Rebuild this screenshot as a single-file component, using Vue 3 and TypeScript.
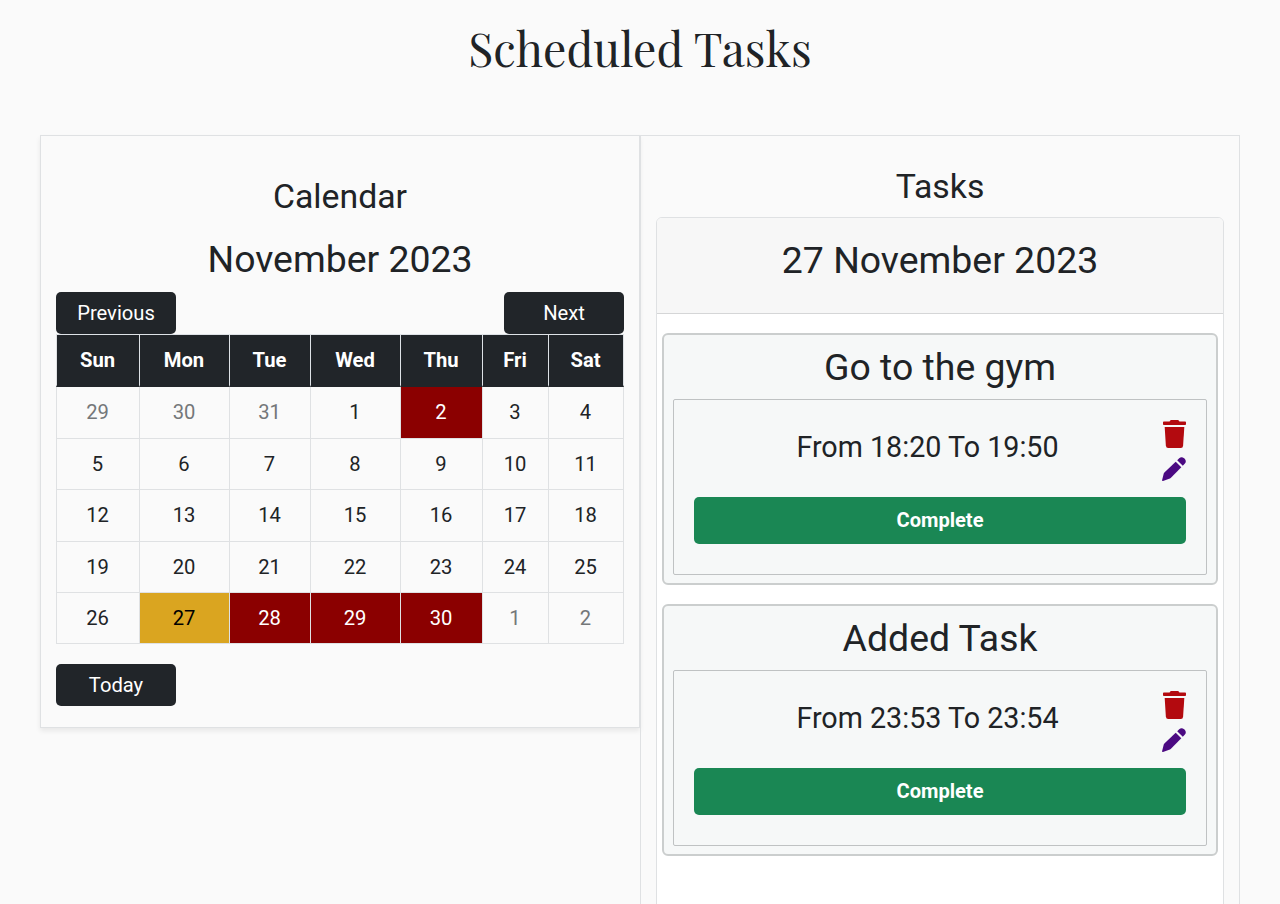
<script setup lang="ts">
interface Day {
  label: number
  state?: 'muted' | 'busy' | 'selected'
}

interface Task {
  title: string
  from: string
  to: string
}

const weekdays: string[] = ['Sun', 'Mon', 'Tue', 'Wed', 'Thu', 'Fri', 'Sat']
const busyDays = [2, 28, 29, 30]

function monthDay(label: number): Day {
  if (label === 27) return { label, state: 'selected' }
  return busyDays.includes(label) ? { label, state: 'busy' } : { label }
}

const days: Day[] = [
  ...[29, 30, 31].map((label): Day => ({ label, state: 'muted' })),
  ...Array.from({ length: 30 }, (_, i) => monthDay(i + 1)),
  ...[1, 2].map((label): Day => ({ label, state: 'muted' })),
]

const tasks: Task[] = [
  { title: 'Go to the gym', from: '18:20', to: '19:50' },
  { title: 'Added Task', from: '23:53', to: '23:54' },
]
</script>

<template>
  <main class="page">
    <h1 class="page-title">Scheduled Tasks</h1>
    <div class="columns">
      <section class="calendar">
        <h3 class="calendar-title">Calendar</h3>
        <h2 class="month">November 2023</h2>
        <div class="nav">
          <button class="btn">Previous</button>
          <button class="btn">Next</button>
        </div>
        <div class="grid">
          <div v-for="name in weekdays" :key="name" class="head">{{ name }}</div>
          <div v-for="(day, i) in days" :key="i" class="day" :class="day.state">{{ day.label }}</div>
        </div>
        <button class="btn today">Today</button>
      </section>

      <section class="tasks">
        <h3 class="tasks-title">Tasks</h3>
        <div class="card">
          <div class="card-header">27 November 2023</div>
          <div class="card-body">
            <article v-for="task in tasks" :key="task.title" class="task">
              <h2 class="task-title">{{ task.title }}</h2>
              <div class="task-box">
                <div class="task-row">
                  <p class="time">From {{ task.from }} To {{ task.to }}</p>
                  <div class="icons">
                    <svg class="trash" viewBox="0 0 23 28">
                      <path d="M.8 1.6H6.6L7.2.6Q7.5 0 8.2 0h6.6q.7 0 1 .6l.6 1h5.8q.8 0 .8.8v1.7q0 .9-.8.9H.8Q0 5 0 4.100V2.400q0-.8.8-.8z" />
                      <path d="M1.700 7H21.300l-1.200 18.800Q19.900 28 17.900 28H5.100Q3.100 28 2.900 25.800z" />
                    </svg>
                    <svg class="pen" viewBox="0 0 24 24">
                      <path d="M13.700 4.700 19.300 10.300 8.700 20.900Q8 21.500 7.200 21.800L1 23.900Q-.1 24.200.1 23L1.600 16.900Q1.800 16.100 2.400 15.500z" />
                      <path d="M15.200 3.200 17.200 1.300Q18.500 0 20 .2 21.300.4 22.500 1.600 23.600 2.700 23.800 4 24 5.500 22.700 6.800L20.800 8.800z" />
                    </svg>
                  </div>
                </div>
                <button class="complete">Complete</button>
              </div>
            </article>
          </div>
        </div>
      </section>
    </div>
  </main>
</template>

<style>
body {
  background: #fafafa;
}
</style>

<style scoped>
.page {
  height: 904px;
  overflow: hidden;
  background: #fafafa;
  color: #202326;
  font-family: Roboto, 'Liberation Sans', sans-serif;
  font-size: 20.2px;
}

.page *,
.page {
  box-sizing: border-box;
}

h1,
h2,
h3,
p {
  margin: 0;
  font-weight: 400;
}

button {
  border: 0;
  padding: 0;
  font-family: inherit;
  color: #fff;
}

.page-title {
  padding-top: 18px;
  height: 136px;
  font-family: 'Playfair Display', 'Liberation Serif', serif;
  font-size: 46.3px;
  line-height: 60px;
  text-align: center;
}

.columns {
  display: flex;
  align-items: flex-start;
  margin-top: -1px;
  padding: 0 40px;
}

.calendar {
  width: 600px;
  height: 593px;
  padding: 40px 15px 0;
  border: 1px solid #dfe1e3;
  box-shadow: 0 3px 5px rgba(0, 0, 0, 0.075);
}

.calendar-title {
  font-size: 33.8px;
  line-height: 41px;
  text-align: center;
}

.month {
  margin-top: 20px;
  font-size: 37.4px;
  line-height: 45px;
  text-align: center;
}

.nav {
  display: flex;
  justify-content: space-between;
  margin-top: 10px;
}

.btn {
  width: 120px;
  height: 42px;
  border-radius: 5px;
  background: #212529;
  font-size: 20.2px;
  line-height: 41px;
}

.grid {
  display: grid;
  grid-template-columns: 84px 90px 81px 90px 82px 66px 75px;
  grid-template-rows: 53px 52px 51px 52px 51px 51px;
  text-align: center;
}

.head {
  padding-right: 1px;
  border-right: 1px solid #dee2e6;
  background: #212529;
  background-clip: padding-box;
  color: #fff;
  font-weight: 700;
  line-height: 52px;
  box-shadow: inset 0 1px #dee2e6;
  border-bottom: 2px solid #212529;
}

.day {
  padding-right: 1px;
  border-right: 1px solid #dfe1e3;
  border-bottom: 1px solid #dfe1e3;
  line-height: 50px;
  background-clip: padding-box;
}

.head:nth-child(7n + 1),
.day:nth-child(7n + 1) {
  border-left: 1px solid #dfe1e3;
}

.muted {
  color: #747779;
}

.busy {
  background-color: #8b0000;
  color: #fff;
}

.selected {
  background-color: #daa520;
  color: #000;
}

.today {
  display: block;
  margin-top: 20px;
}

.tasks {
  width: 600px;
  height: 900px;
  padding: 30px 15px 0;
  border: 1px solid #dfe1e3;
}

.tasks-title {
  margin-bottom: 10px;
  font-size: 33.8px;
  line-height: 41px;
  text-align: center;
}

.card {
  height: 800px;
  border: 1px solid #dfe1e3;
  border-radius: 6px;
  background: #fff;
}

.card-header {
  height: 96px;
  border-bottom: 1px solid #d5d6d7;
  border-radius: 5px 5px 0 0;
  background: #f7f7f7;
  font-size: 37.4px;
  line-height: 84px;
  text-align: center;
}

.card-body {
  display: flex;
  flex-direction: column;
  gap: 19px;
  padding: 19px 5px 0;
}

.task {
  height: 252px;
  padding: 10px 9px 0;
  border: 2px solid #cbcece;
  border-radius: 6px;
  background: #f6f8f8;
}

.task-title {
  margin-bottom: 9px;
  font-size: 37.4px;
  line-height: 45px;
  text-align: center;
}

.task-box {
  height: 176px;
  padding: 20px 20px 0;
  border: 1px solid #bfc2c3;
  border-radius: 2px;
}

.task-row {
  display: flex;
  height: 77px;
}

.time {
  flex: 1;
  font-size: 28.7px;
  line-height: 54px;
  text-align: center;
}

.icons {
  display: flex;
  flex-direction: column;
  align-items: flex-end;
  width: 25px;
}

.trash {
  width: 23px;
  height: 28px;
  fill: #b30a0f;
}

.pen {
  width: 24px;
  height: 24px;
  margin-top: 9px;
  fill: #4b0a82;
}

.complete {
  display: block;
  width: 100%;
  height: 47px;
  border-radius: 5px;
  background: #1a8754;
  font-size: 20.1px;
  font-weight: 700;
  line-height: 47px;
}
</style>
